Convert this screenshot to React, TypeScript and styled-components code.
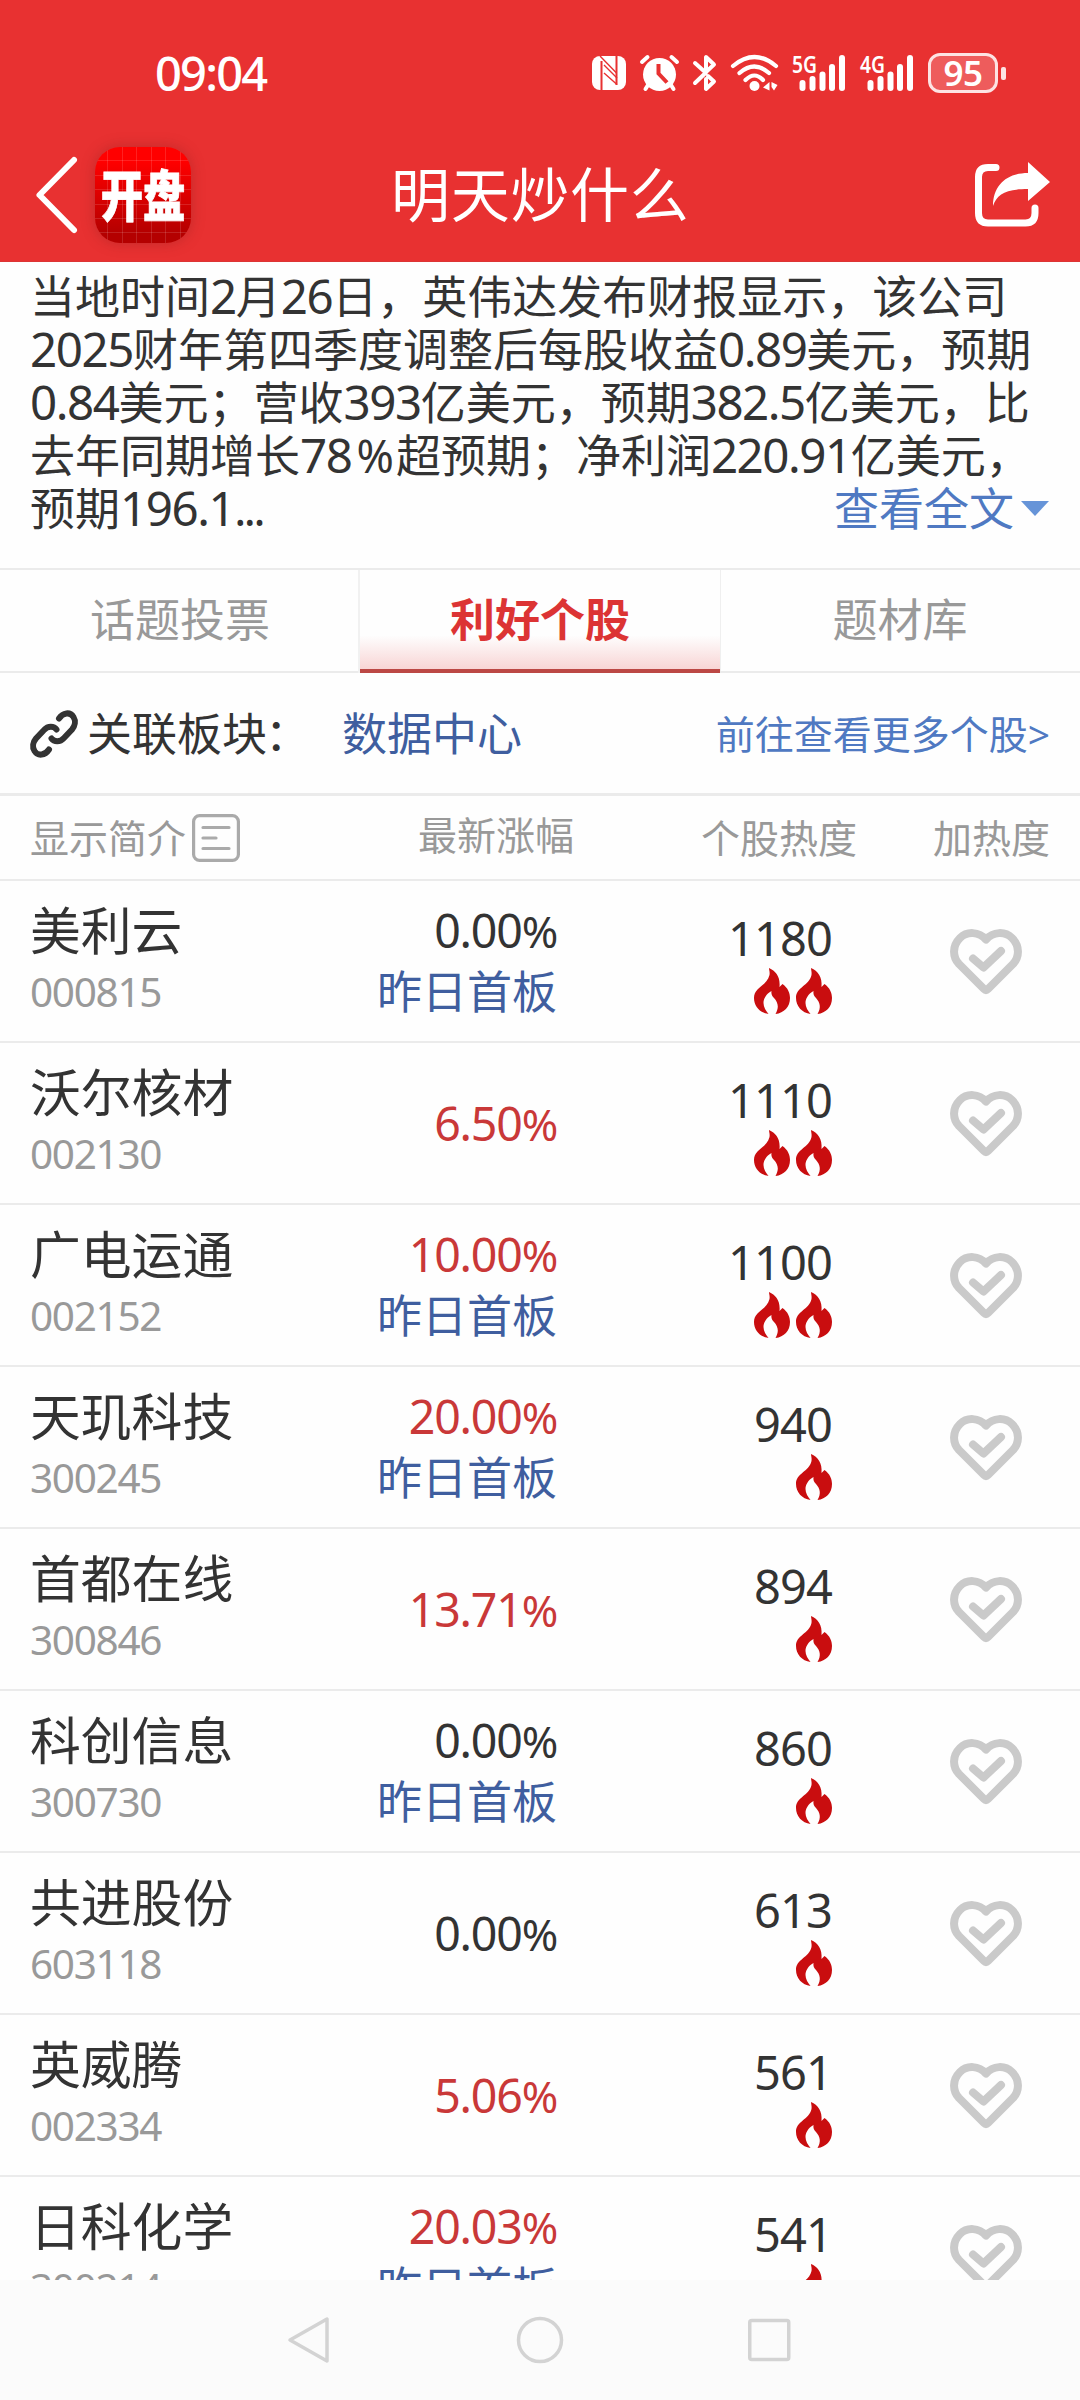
import React from 'react';
import styled, { createGlobalStyle, css } from 'styled-components';

const GlobalStyle = createGlobalStyle`
  * { box-sizing: border-box; }
  body {
    margin: 0;
    background: #fefefe;
    font-family: "Noto Sans", "Noto Sans CJK SC", sans-serif;
    color: #333;
  }
  svg { display: block; flex: none; overflow: visible; }
`;

const RED = '#e83131';
const LINE = '#ebebeb';

const Screen = styled.div`
  width: 1080px;
  height: 2400px;
  display: flex;
  flex-direction: column;
  overflow: hidden;
  background: #fefefe;
`;

const Top = styled.header`
  flex: none;
  height: 262px;
  background: ${RED};
  color: #fff;
  border-bottom: 1px solid #dc3535;
`;

const StatusBar = styled.div`
  height: 146px;
  padding: 53px 74px 0 155px;
  display: flex;
  align-items: flex-start;
  justify-content: space-between;
`;

const Clock = styled.span`
  font-size: 47px;
  line-height: 41px;
  font-weight: 500;
  letter-spacing: -1.8px;
`;

const StatusIcons = styled.div`
  display: flex;
  align-items: center;
  height: 40px;
`;

const Gap = styled.span<{ $w: number }>`
  width: ${p => p.$w}px;
  flex: none;
`;

const Battery = styled.div`
  width: 70px;
  height: 40px;
  border: 3px solid #fde3e3;
  border-radius: 12px;
  background: #ee5c5c;
  font-size: 35px;
  line-height: 33px;
  font-weight: 600;
  letter-spacing: -0.5px;
  text-align: center;
`;

const BatteryTip = styled.span`
  width: 5px;
  height: 13px;
  margin-left: 3px;
  border-radius: 2px;
  background: #fde3e3;
`;

const NavBar = styled.div`
  height: 96px;
  padding: 0 30px 0 36px;
  display: grid;
  grid-template-columns: 59px 96px 1fr auto;
  align-items: center;
`;

const Logo = styled.div`
  width: 96px;
  height: 96px;
  border-radius: 25px;
  display: flex;
  align-items: center;
  justify-content: center;
  overflow: hidden;
  background:
    repeating-linear-gradient(90deg, transparent 0 13.5px, rgba(255, 255, 255, 0.13) 13.5px 14.5px) -1px 0 / 94px 100%,
    repeating-linear-gradient(180deg, transparent 0 13.4px, rgba(255, 255, 255, 0.13) 13.4px 14.4px),
    linear-gradient(#ff0000 15%, #b40000 90%);
  box-shadow: 0 0 14px rgba(120, 30, 30, 0.35);
`;

const LogoText = styled.span`
  flex: none;
  font-size: 55px;
  line-height: 92px;
  font-weight: 900;
  -webkit-text-stroke: 0.8px #fff;
  transform: scaleX(0.77);
`;

const Title = styled.h1`
  margin: 0 0 0 200px;
  font-size: 59px;
  line-height: 97px;
  font-weight: 400;
  letter-spacing: 0.7px;
  white-space: nowrap;
`;

const Article = styled.section`
  flex: none;
  height: 306px;
  padding: 8px 31px 0 30px;
  font-size: 45px;
  line-height: 53px;
`;

const Line = styled.div`
  height: 53px;
  white-space: nowrap;
  display: flex;
  justify-content: space-between;
`;

const Digits = styled.span`
  font-size: 47.5px;
  letter-spacing: -1.45px;
  line-height: 1;
`;

const Percent = styled.span`
  padding: 0 2px 0 5px;
`;

const Ellipsis = styled.span`
  letter-spacing: -2.4px;
`;

const MoreLink = styled.a`
  display: flex;
  align-items: center;
  gap: 7px;
  color: #4f79c2;
`;

const Caret = styled.span`
  width: 0;
  height: 0;
  border: 14.5px solid transparent;
  border-top: 15px solid #6694d8;
  border-bottom: 0;
`;

const Tabs = styled.nav`
  flex: none;
  height: 105px;
  display: grid;
  grid-template-columns: repeat(3, 360px);
  border-top: 2px solid ${LINE};
`;

const Tab = styled.div<{ $active?: boolean }>`
  text-align: center;
  font-size: 45px;
  line-height: 99px;
  color: #999;
  border-bottom: 2px solid ${LINE};
  ${p => p.$active && css`
    color: #dc3434;
    font-weight: 700;
    border-bottom: 4px solid #bc4845;
    box-shadow: -2px 0 0 #f1f1f1, 1px 0 0 #efefef;
    background: linear-gradient(#fefefe 66%, #f8d5d5);
  `}
`;

const Related = styled.section`
  flex: none;
  height: 123px;
  padding: 2px 30px 0;
  display: flex;
  align-items: center;
  font-size: 45px;
  line-height: 60px;
  border-bottom: 3px solid ${LINE};
`;

const RelatedLabel = styled.span`
  width: 255px;
  margin-left: 9px;
  white-space: nowrap;
`;

const Colon = styled.span`
  margin-left: -2px;
`;

const Board = styled.a`
  flex: 1;
  color: #3f5e9f;
`;

const AllStocks = styled.a`
  font-size: 39px;
  color: #4f79c2;
`;

const TableHead = styled.div`
  flex: none;
  height: 85px;
  padding: 0 30px;
  display: grid;
  grid-template-columns: 344px 200px 283px 193px;
  align-items: center;
  font-size: 39px;
  line-height: 50px;
  color: #999;
  border-bottom: 2px solid ${LINE};
`;

const HeadCell = styled.div<{ $lift?: boolean }>`
  text-align: right;
  padding-bottom: ${p => (p.$lift ? 5 : 0)}px;
`;

const Toggle = styled.div`
  display: flex;
  align-items: center;
  gap: 6px;
`;

const List = styled.main`
  flex: 1;
  min-height: 0;
  overflow: hidden;
`;

const Row = styled.div`
  height: 162px;
  padding: 0 30px;
  display: grid;
  grid-template-columns: 327px 200px 275px 218px;
  border-bottom: 2px solid ${LINE};
`;

const NameCell = styled.div`
  padding-top: 20px;
`;

const Name = styled.div`
  font-size: 50.8px;
  line-height: 60px;
`;

const Code = styled.div`
  font-size: 40.5px;
  line-height: 61px;
  letter-spacing: -1.3px;
  color: #999;
`;

const ChangeCell = styled.div`
  display: flex;
  flex-direction: column;
  justify-content: center;
  text-align: right;
  line-height: 61px;
`;

const Change = styled.div<{ $up: boolean }>`
  height: 61px;
  font-size: 46.5px;
  letter-spacing: -1.2px;
  color: ${p => (p.$up ? '#c93838' : '#333')};
`;

const ChangeUnit = styled.span`
  font-size: 44px;
`;

const Tag = styled.div`
  font-size: 45px;
  color: #3f5e9f;
`;

const HeatCell = styled.div`
  padding-top: 27px;
  display: flex;
  flex-direction: column;
  align-items: flex-end;
`;

const Heat = styled.div`
  font-size: 47px;
  line-height: 60px;
  letter-spacing: -0.9px;
`;

const Flames = styled.div`
  display: flex;
  gap: 6px;
`;

const LikeCell = styled.div`
  padding: 48px 28px 0 0;
  display: flex;
  justify-content: flex-end;
`;

const SystemNav = styled.footer`
  flex: none;
  height: 120px;
  display: flex;
  align-items: center;
  justify-content: center;
  gap: 183px;
  background: #fbfbfb;
`;

const Nfc = () => (
  <svg width="34" height="34" viewBox="0 0 34 34">
    <rect width="34" height="34" rx="8" fill="#fff" />
    <path d="M9.500 34V5M24.500 0V29" fill="none" stroke={RED} strokeWidth="2" />
    <path d="M8 0L24.500 17M12 9L25 22M12 17L25 28.500" fill="none" stroke={RED} strokeWidth="1.400" />
  </svg>
);

const Alarm = () => (
  <svg width="39" height="36" viewBox="0 0 39 36" fill="none" stroke="#fff" strokeWidth="4" strokeLinecap="round">
    <circle cx="19.500" cy="19.500" r="16.500" fill="#fff" stroke="none" />
    <path d="M2 7L7.500 2M37 7L31.500 2M8 30L5.500 34M31 30L33.500 34" />
    <path d="M18.500 9V18.500L27 27.500" stroke={RED} strokeWidth="4" strokeLinecap="butt" />
  </svg>
);

const Bluetooth = () => (
  <svg width="24" height="36" viewBox="0 0 24 36" fill="none" stroke="#fff" strokeWidth="4" strokeLinecap="round" strokeLinejoin="round">
    <path d="M2 8L12.500 17.500L21 9.500L13 2V17.500L2 28M15 21L21 26.500L13 34V24" />
  </svg>
);

const Wifi = () => (
  <svg width="47" height="36" viewBox="0 0 47 36" fill="none" stroke="#fff" strokeWidth="4.200" strokeLinecap="round">
    <path d="M2 11Q23.500 -7 45 11M8.500 18Q23.500 5 38 18M14.500 25Q23.500 16 32 25" />
    <circle cx="23.500" cy="31" r="5" fill="#fff" stroke="none" />
    <path d="M38.500 27V35.500L32 32.500ZM40.500 27L46.500 30L43 35.500L40.500 32Z" fill="#fff" stroke="none" />
  </svg>
);

const Signal = ({ label }: { label: string }) => (
  <svg width="54" height="36" viewBox="0 0 54 36">
    <text x="0" y="17.500" fontSize="24" fontWeight="600" fill="#fff" textLength="25" lengthAdjust="spacingAndGlyphs">{label}</text>
    <g fill="#fff">
      <rect x="7.500" y="25" width="6" height="11" rx="3" />
      <rect x="17.500" y="21" width="6" height="15" rx="3" />
      <rect x="27.500" y="16.500" width="6" height="19.500" rx="3" />
      <rect x="37" y="9" width="6" height="27" rx="3" />
      <rect x="47" y="0" width="6" height="36" rx="3" />
    </g>
  </svg>
);

const Back = () => (
  <svg width="42" height="76" viewBox="0 0 42 76" fill="none" stroke="#fff" strokeWidth="6" strokeLinecap="round" strokeLinejoin="round">
    <path d="M38 3L3.500 38L38 73" />
  </svg>
);

const Share = () => (
  <svg width="75" height="66" viewBox="0 0 75 66">
    <path d="M21 5.500H13Q3.500 5.500 3.500 15V51Q3.500 61 13 61H50.500Q60 61 60 51V46" fill="none" stroke="#fff" strokeWidth="7" strokeLinecap="round" />
    <path d="M75 20L53 0V11C32 11 18 23 18 44C22 32 31 27 53 27V39Z" fill="#fff" />
  </svg>
);

const Chain = () => (
  <svg width="48" height="48" viewBox="0 0 48 48" fill="none" stroke="#333" strokeWidth="6" strokeLinecap="round">
    <path d="M29 8.500C33 2.500 40 1.500 43.500 7C46 11 45 16 42 19.500L34 28C30 32.500 24 32 21.500 28.500" />
    <path d="M19 39.500C15 45.500 8 46.500 4.500 41C2 37 3 32 6 28.500L14 20C18 15.500 24 16 26.500 19.500" />
  </svg>
);

const Doc = () => (
  <svg width="48" height="48" viewBox="0 0 48 48" fill="none" stroke="#aaa" strokeWidth="3.200" strokeLinecap="round">
    <rect x="1.600" y="1.600" width="44.800" height="44.800" rx="6" />
    <path d="M11 13.500H37M11 24H24M11 34.500H37" />
  </svg>
);

const Flame = () => (
  <svg width="36" height="46" viewBox="0 0 36 46">
    <path d="M15 0C22 3 26.500 9 25.500 19L28.500 16C34 20 36 25 36 30C36 39 30 45 21.500 46C25 40 24.500 35 20 30C18 28 17 26 17.500 23C12 26 9.500 31 9.500 35C9.500 39 12 43 14.500 46C6 45 0 38 0 30C0 19 13 18 15.500 7C16 4 15 2 15 0Z" fill="#c90d0f" />
  </svg>
);

const Heart = () => (
  <svg width="72" height="65" viewBox="0 0 72 65" fill="none" stroke="#cacaca" strokeWidth="8" strokeLinecap="round" strokeLinejoin="round">
    <path d="M36 10.500C29 2.500 17 2 10 9C2 17 2.500 28 9 35L34 60Q36 62 38 60L63 35C69.500 28 70 17 62 9C55 2 43 2.500 36 10.500Z" />
    <path d="M23 29.500L33.500 38.500L51 22" />
  </svg>
);

const rich = (text: string) =>
  text.split(/([0-9.]+|%)/).map((part, i) => {
    if (part === '%') return <Percent key={i}>%</Percent>;
    if (/^[0-9.]+$/.test(part)) return <Digits key={i}>{part}</Digits>;
    return part;
  });

const articleLines = [
  '当地时间2月26日，英伟达发布财报显示，该公司',
  '2025财年第四季度调整后每股收益0.89美元，预期',
  '0.84美元；营收393亿美元，预期382.5亿美元，比',
  '去年同期增长78%超预期；净利润220.91亿美元，',
];

interface Stock {
  name: string;
  code: string;
  change: string;
  heat: number;
  tagged?: boolean;
}

const stocks: Stock[] = [
  { name: '美利云', code: '000815', change: '0.00', heat: 1180, tagged: true },
  { name: '沃尔核材', code: '002130', change: '6.50', heat: 1110 },
  { name: '广电运通', code: '002152', change: '10.00', heat: 1100, tagged: true },
  { name: '天玑科技', code: '300245', change: '20.00', heat: 940, tagged: true },
  { name: '首都在线', code: '300846', change: '13.71', heat: 894 },
  { name: '科创信息', code: '300730', change: '0.00', heat: 860, tagged: true },
  { name: '共进股份', code: '603118', change: '0.00', heat: 613 },
  { name: '英威腾', code: '002334', change: '5.06', heat: 561 },
  { name: '日科化学', code: '300214', change: '20.03', heat: 541, tagged: true },
];

export default function App() {
  return (
    <Screen>
      <GlobalStyle />
      <Top>
        <StatusBar>
          <Clock>09:04</Clock>
          <StatusIcons>
            <Nfc />
            <Gap $w={14} />
            <Alarm />
            <Gap $w={14} />
            <Bluetooth />
            <Gap $w={14} />
            <Wifi />
            <Gap $w={14} />
            <Signal label="5G" />
            <Gap $w={14} />
            <Signal label="4G" />
            <Gap $w={14} />
            <Battery>95</Battery>
            <BatteryTip />
          </StatusIcons>
        </StatusBar>
        <NavBar>
          <Back />
          <Logo><LogoText>开盘</LogoText></Logo>
          <Title>明天炒什么</Title>
          <Share />
        </NavBar>
      </Top>
      <Article>
        {articleLines.map(line => <Line key={line}><span>{rich(line)}</span></Line>)}
        <Line>
          <span>{rich('预期196.1')}<Ellipsis>...</Ellipsis></span>
          <MoreLink>查看全文<Caret /></MoreLink>
        </Line>
      </Article>
      <Tabs>
        <Tab>话题投票</Tab>
        <Tab $active>利好个股</Tab>
        <Tab>题材库</Tab>
      </Tabs>
      <Related>
        <Chain />
        <RelatedLabel>关联板块<Colon>：</Colon></RelatedLabel>
        <Board>数据中心</Board>
        <AllStocks>前往查看更多个股&gt;</AllStocks>
      </Related>
      <TableHead>
        <Toggle>显示简介<Doc /></Toggle>
        <HeadCell $lift>最新涨幅</HeadCell>
        <HeadCell>个股热度</HeadCell>
        <HeadCell>加热度</HeadCell>
      </TableHead>
      <List>
        {stocks.map(s => (
          <Row key={s.code}>
            <NameCell>
              <Name>{s.name}</Name>
              <Code>{s.code}</Code>
            </NameCell>
            <ChangeCell>
              <Change $up={s.change !== '0.00'}>{s.change}<ChangeUnit>%</ChangeUnit></Change>
              {s.tagged && <Tag>昨日首板</Tag>}
            </ChangeCell>
            <HeatCell>
              <Heat>{s.heat}</Heat>
              <Flames>
                <Flame />
                {s.heat > 1000 && <Flame />}
              </Flames>
            </HeatCell>
            <LikeCell><Heart /></LikeCell>
          </Row>
        ))}
      </List>
      <SystemNav>
        <svg width="46" height="50" viewBox="0 0 46 50" fill="none" stroke="#d3d3d3" strokeWidth="3.500" strokeLinejoin="round">
          <path d="M41 4V46L4 25Z" />
        </svg>
        <svg width="50" height="50" viewBox="0 0 50 50" fill="none" stroke="#d3d3d3" strokeWidth="3.500">
          <circle cx="25" cy="25" r="21.500" />
        </svg>
        <svg width="46" height="50" viewBox="0 0 46 50" fill="none" stroke="#d3d3d3" strokeWidth="3.500">
          <rect x="1.750" y="5.500" width="39" height="39" rx="2" />
        </svg>
      </SystemNav>
    </Screen>
  );
}
